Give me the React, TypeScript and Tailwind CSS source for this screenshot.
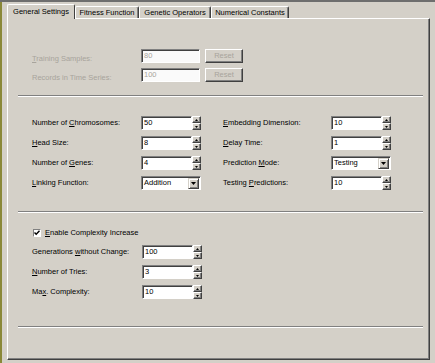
import React from 'react';

function Mn({ children }: { children: React.ReactNode }) {
  return <span className="underline decoration-1 underline-offset-[1px]">{children}</span>;
}

function DropArrow() {
  return (
    <svg width="5" height="3" viewBox="0 0 5 3" className="block">
      <path d="M0 0 L5 0 L2.5 3 Z" fill="#000" />
    </svg>
  );
}

function SpinBtn({ up }: { up?: boolean }) {
  return (
    <div className="flex h-[7px] w-[9px] items-center justify-center border-t border-l border-t-white border-l-white border-b border-r border-b-[#404040] border-r-[#404040] bg-[#d4d0c8] shadow-[inset_-1px_-1px_0_#808080]">
      <svg width="3" height="2" viewBox="0 0 3 2" className="block">
        {up ? <path d="M1.5 0 L3 2 L0 2 Z" fill="#000" /> : <path d="M0 0 L3 0 L1.5 2 Z" fill="#000" />}
      </svg>
    </div>
  );
}

function SpinBox({ value }: { value: string }) {
  return (
    <div className="flex h-[14px] w-[60px]">
      <div className="flex h-full w-[51px] items-center border-t border-l border-t-[#808080] border-l-[#808080] border-b border-r border-b-white border-r-white bg-white pl-[2px] text-[7.5px] text-black shadow-[inset_1px_1px_0_#404040]">
        {value}
      </div>
      <div className="flex h-full w-[9px] flex-col">
        <SpinBtn up />
        <SpinBtn />
      </div>
    </div>
  );
}

function Combo({ value }: { value: string }) {
  return (
    <div className="flex h-[14px] w-[60px] items-center border-t border-l border-t-[#808080] border-l-[#808080] border-b border-r border-b-white border-r-white bg-white shadow-[inset_1px_1px_0_#404040]">
      <div className="flex-1 pl-[2px] text-[7.5px] text-black">{value}</div>
      <div className="mr-px flex h-[11px] w-[11px] items-center justify-center border-t border-l border-t-[#d4d0c8] border-l-[#d4d0c8] border-b border-r border-b-[#404040] border-r-[#404040] bg-[#d4d0c8] shadow-[inset_1px_1px_0_#fff,inset_-1px_-1px_0_#808080]">
        <DropArrow />
      </div>
    </div>
  );
}

function Label({ children, disabled }: { children: React.ReactNode; disabled?: boolean }) {
  return (
    <span className={disabled ? 'whitespace-nowrap text-[7.5px] text-[#a8a49c]' : 'whitespace-nowrap text-[7.5px] text-black'}>
      {children}
    </span>
  );
}

function Separator() {
  return <div className="ml-[10px] mr-[6px] h-[2px] border-t border-t-[#808080] border-b border-b-white" />;
}

function DisabledRow({ label, value }: { label: React.ReactNode; value: string }) {
  return (
    <div className="flex h-[14px] items-center">
      <div className="w-[109px]">
        <Label disabled>{label}</Label>
      </div>
      <div className="flex h-full w-[59px] items-center border-t border-l border-t-[#808080] border-l-[#808080] border-b border-r border-b-white border-r-white bg-[#fafafa] pl-[2px] text-[7.5px] text-[#a8a49c] shadow-[inset_1px_1px_0_#404040]">
        {value}
      </div>
      <div className="ml-[5px] flex h-full w-[38px] items-center justify-center border-t border-l border-t-white border-l-white border-b border-r border-b-[#404040] border-r-[#404040] text-[7.5px] text-[#a8a49c] shadow-[inset_-1px_-1px_0_#808080]">
        Reset
      </div>
    </div>
  );
}

const tabs = [
  { name: 'Fitness Function', w: 'w-[64px]' },
  { name: 'Genetic Operators', w: 'w-[72px]' },
  { name: 'Numerical Constants', w: 'w-[78px]' },
];

export default function App() {
  return (
    <div className="h-[363px] w-[435px] overflow-hidden bg-[#d4d0c8] font-['Liberation_Sans',Arial,sans-serif] leading-none">
      <div className="h-[2px] bg-[#6e6e6e]" />
      <div className="flex h-[361px]">
        <div className="w-[2px] bg-[#8a8838]" />
        <div className="flex flex-col pl-[5px] pt-[2px]">
          {/* Tabs */}
          <div className="flex items-end">
            <div className="relative z-10 -mb-px flex h-[15px] w-[68px] items-center justify-center rounded-t-[2px] border-l border-t border-white border-r border-r-[#404040] bg-[#d4d0c8] text-[7.5px] text-black">
              General Settings
            </div>
            {tabs.map((t) => (
              <div
                key={t.name}
                className={`flex h-[12px] ${t.w} items-center justify-center whitespace-nowrap rounded-t-[2px] border-l border-t border-white border-r border-r-[#404040] text-[7.5px] text-black shadow-[inset_-1px_0_0_#808080]`}
              >
                {t.name}
              </div>
            ))}
          </div>

          {/* Panel */}
          <div className="flex h-[342px] w-[423px] flex-col border-l border-t border-white border-r border-b border-r-[#404040] border-b-[#404040] shadow-[inset_-1px_-1px_0_#808080]">
            {/* Section 1 */}
            <div className="flex flex-col gap-[5px] pl-[24px] pt-[30px]">
              <DisabledRow label={<><Mn>T</Mn>raining Samples:</>} value="80" />
              <DisabledRow label="Records in Time Series:" value="100" />
            </div>
            <div className="mt-[13px]">
              <Separator />
            </div>

            {/* Section 2 */}
            <div className="grid grid-cols-[109px_60px_22px_108px_60px] items-center gap-y-[6px] pl-[24px] pt-[19px] [&>*]:flex [&>*]:h-[14px] [&>*]:items-center">
              <div><Label>Number of <Mn>C</Mn>hromosomes:</Label></div>
              <div><SpinBox value="50" /></div>
              <div />
              <div><Label><Mn>E</Mn>mbedding Dimension:</Label></div>
              <div><SpinBox value="10" /></div>

              <div><Label><Mn>H</Mn>ead Size:</Label></div>
              <div><SpinBox value="8" /></div>
              <div />
              <div><Label><Mn>D</Mn>elay Time:</Label></div>
              <div><SpinBox value="1" /></div>

              <div><Label>Number of <Mn>G</Mn>enes:</Label></div>
              <div><SpinBox value="4" /></div>
              <div />
              <div><Label>Prediction <Mn>M</Mn>ode:</Label></div>
              <div><Combo value="Testing" /></div>

              <div><Label><Mn>L</Mn>inking Function:</Label></div>
              <div><Combo value="Addition" /></div>
              <div />
              <div><Label>Testing <Mn>P</Mn>redictions:</Label></div>
              <div><SpinBox value="10" /></div>
            </div>
            <div className="mt-[21px]">
              <Separator />
            </div>

            {/* Section 3 */}
            <div className="flex flex-col pl-[25px] pt-[16px]">
              <div className="flex h-[8px] items-center gap-[4px]">
                <div className="flex h-[8px] w-[8px] items-center justify-center border-t border-l border-t-[#808080] border-l-[#808080] border-b border-r border-b-white border-r-white bg-white">
                  <svg width="6" height="6" viewBox="0 0 6 6" className="block">
                    <path d="M0.5 2.5 L2.2 4.3 L5.5 0.8" stroke="#000" strokeWidth="1.4" fill="none" />
                  </svg>
                </div>
                <Label>
                  <Mn>E</Mn>nable Complexity Increase
                </Label>
              </div>
            </div>
            <div className="grid grid-cols-[110px_60px] gap-y-[6px] pl-[24px] pt-[8px] [&>*]:flex [&>*]:h-[14px] [&>*]:items-center">
              <div><Label>Generations <Mn>w</Mn>ithout Change:</Label></div>
              <div><SpinBox value="100" /></div>
              <div><Label><Mn>N</Mn>umber of Tries:</Label></div>
              <div><SpinBox value="3" /></div>
              <div><Label>Ma<Mn>x</Mn>. Complexity:</Label></div>
              <div><SpinBox value="10" /></div>
            </div>
            <div className="mt-[27px]">
              <Separator />
            </div>
          </div>
        </div>
      </div>
    </div>
  );
}
